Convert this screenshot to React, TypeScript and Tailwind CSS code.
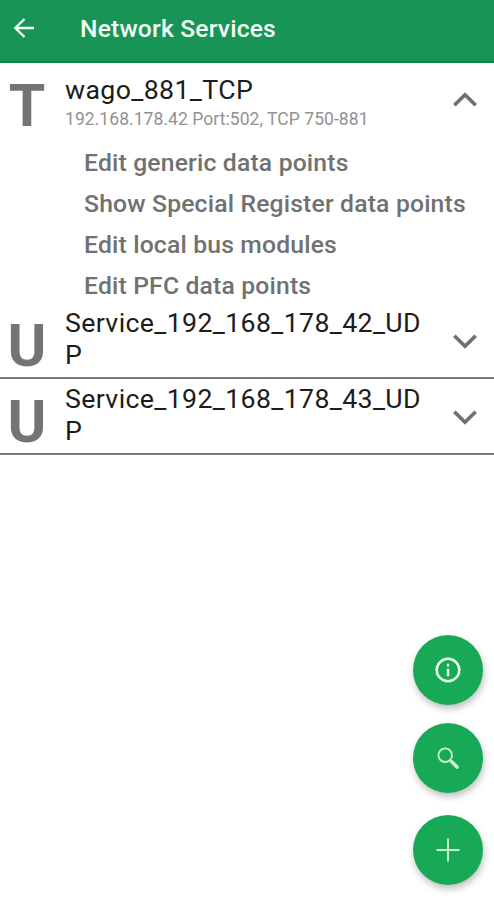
import type { ReactNode } from "react";

const ROBOTO = "font-['Roboto','Liberation_Sans',sans-serif]";

function Chevron({ up = false }: { up?: boolean }) {
  return (
    <svg className="h-[16px] w-[26px] shrink-0" viewBox="0 0 26 16" fill="none" stroke="#707070" strokeWidth="3.7">
      <path d={up ? "M2.3 13.3 13 2.8 23.7 13.3" : "M2.3 2.7 13 13.2 23.7 2.7"} />
    </svg>
  );
}

function Badge({ letter }: { letter: string }) {
  return (
    <div className="w-[54px] shrink-0 text-center text-[59px] leading-[60px] font-bold text-[#747474]">
      {letter}
    </div>
  );
}

function UdpService({ lines }: { lines: [string, string] }) {
  return (
    <li className="flex h-[76.55px] border-b-2 border-[#7b7b7b]">
      <div className="pt-[13.3px]">
        <Badge letter="U" />
      </div>
      <div className="ml-[11px] w-[376px] pt-[4.4px] text-[26.7px] leading-[32px] tracking-[0.36px] text-[#1c1c1c]">
        <div>{lines[0]}</div>
        <div>{lines[1]}</div>
      </div>
      <div className="ml-[11px] pt-[30.2px]">
        <Chevron />
      </div>
    </li>
  );
}

function Fab({ label, children }: { label: string; children: ReactNode }) {
  return (
    <button
      aria-label={label}
      className="flex size-[70px] items-center justify-center rounded-full bg-[#18a957] shadow-[1px_4px_7px_rgba(0,0,0,0.25)]"
    >
      {children}
    </button>
  );
}

const actions = [
  { text: "Edit generic data points" },
  { text: "Show Special Register data points" },
  { text: "Edit local bus modules" },
  { text: "Edit PFC data points" },
];

export default function App() {
  return (
    <div className={`relative h-[900px] w-[494px] overflow-hidden bg-white ${ROBOTO}`}>
      <header className="flex h-[63px] items-start border-b-2 border-[#0a8a40] bg-[#199457]">
        <svg className="mt-[17px] ml-[13px] h-[22px] w-[22px] shrink-0" viewBox="0 0 22 22" fill="none" stroke="#f4fff4" strokeWidth="2.4">
          <path d="M21 11H2.5M11.5 2 2.3 11l9.2 9" />
        </svg>
        <h1 className="mt-[14px] ml-[45px] text-[24.6px] leading-[30px] font-medium tracking-[0.2px] whitespace-nowrap text-[#f4fff4]">Network Services</h1>
      </header>
      <ul>
        <li className="h-[239.4px]">
          <div className="flex h-[79px]">
            <div className="pt-[13px]">
              <Badge letter="T" />
            </div>
            <div className="ml-[11px] w-[376px] whitespace-nowrap">
              <div className="pt-[11px] text-[26.7px] leading-[32px] tracking-[0.38px] text-[#1c1c1c]">wago_881_TCP</div>
              <div className="pt-[3px] text-[17.5px] leading-[20px] tracking-[0.06px] text-[#929292]">192.168.178.42 Port:502, TCP 750-881</div>
            </div>
            <div className="ml-[11px] pt-[29px]">
              <Chevron up />
            </div>
          </div>
          <div className="pl-[84px]">
            {actions.map((a) => (
              <div key={a.text} className="h-[41px] text-[24.7px] leading-[41px] font-medium tracking-[0.18px] whitespace-nowrap text-[#717171]">
                {a.text}
              </div>
            ))}
          </div>
        </li>
        <UdpService lines={["Service_192_168_178_42_UD", "P"]} />
        <UdpService lines={["Service_192_168_178_43_UD", "P"]} />
      </ul>
      <div className="absolute top-[635px] left-[413px] flex flex-col">
        <Fab label="Information">
          <svg className="size-[26px]" viewBox="0 0 26 26" fill="none" stroke="#effff0" strokeWidth="2.5">
            <circle cx="13" cy="13" r="11.3" />
            <path d="M13 11.8v7.4M13 6.8v2.6" />
          </svg>
        </Fab>
        <div className="h-[18px]" />
        <Fab label="Search">
          <svg className="size-[24px]" viewBox="0 0 24 24" fill="none" stroke="#c9f5cf">
            <circle cx="9.2" cy="9.2" r="6.8" strokeWidth="1.8" />
            <path d="m14 14 2 2" strokeWidth="1.8" />
            <path d="m16 16 5 5" strokeWidth="3.6" strokeLinecap="round" />
          </svg>
        </Fab>
        <div className="h-[22px]" />
        <Fab label="Add">
          <svg className="size-[24px]" viewBox="0 0 24 24" fill="none" stroke="#c9f5cf" strokeWidth="1.9">
            <path d="M12 .5v23M.5 12h23" />
          </svg>
        </Fab>
      </div>
    </div>
  );
}
